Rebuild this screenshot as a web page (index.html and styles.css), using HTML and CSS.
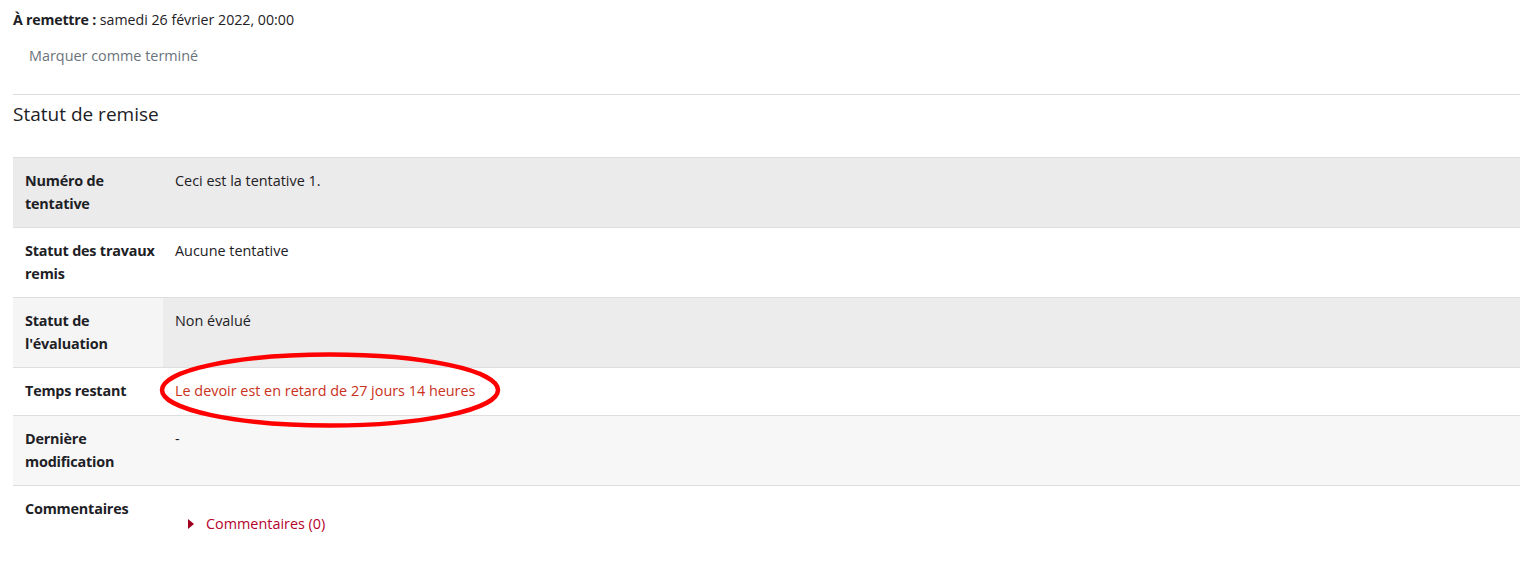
FILE: index.html
```html
<!DOCTYPE html>
<html lang="fr">
<head>
<meta charset="utf-8">
<title>Statut de remise</title>
<link rel="stylesheet" href="styles.css">
</head>
<body>
<div class="page">
  <div class="dates"><strong>À remettre :</strong> samedi 26 février 2022, 00:00</div>
  <div class="completion"><span class="btn-complete">Marquer comme terminé</span></div>
  <hr class="sep">
  <h3 class="title">Statut de remise</h3>
  <div class="status">
    <div class="row r-grey">
      <div class="label">Numéro de tentative</div>
      <div class="value">Ceci est la tentative 1.</div>
    </div>
    <div class="row r-white">
      <div class="label">Statut des travaux remis</div>
      <div class="value">Aucune tentative</div>
    </div>
    <div class="row r-split">
      <div class="label">Statut de l'évaluation</div>
      <div class="value">Non évalué</div>
    </div>
    <div class="row r-white r-short">
      <div class="label">Temps restant</div>
      <div class="value late">Le devoir est en retard de 27 jours 14 heures</div>
      <svg class="circle" width="346" height="80" viewBox="0 0 346 80"><ellipse cx="173" cy="40" rx="168" ry="35.5" fill="none" stroke="#ff0000" stroke-width="4.5"/></svg>
    </div>
    <div class="row r-light">
      <div class="label">Dernière modification</div>
      <div class="value">-</div>
    </div>
    <div class="row r-white r-last">
      <div class="label">Commentaires</div>
      <div class="value">
        <div class="comments"><svg class="caret" width="6" height="10" viewBox="0 0 6 10"><path d="M0 0 L6 5 L0 10 Z" fill="#a0001e"/></svg><span class="clink">Commentaires (0)</span></div>
      </div>
    </div>
  </div>
</div>
</body>
</html>
```
FILE: styles.css
```css
html, body {
  margin: 0;
  padding: 0;
  background: #fff;
}
body {
  font-family: "Open Sans", "Noto Sans", sans-serif;
  font-size: 14.4px;
  color: #1d2125;
}
.page {
  padding: 9px 3px 0 13px;
}
.dates {
  line-height: 21px;
  font-size: 14.2px;
}
.dates strong {
  font-weight: 700;
  letter-spacing: -0.2px;
}
.completion {
  padding: 15px 0 0 16px;
  line-height: 22px;
}
.btn-complete {
  color: #6a737b;
}
.sep {
  margin: 27px 0 0 0;
  border: 0;
  border-top: 1px solid #dcdcdc;
  height: 0;
}
.title {
  margin: 6px 0 0 0;
  font-size: 19px;
  font-weight: 400;
  line-height: 26px;
}
.status {
  margin-top: 30px;
}
.row {
  display: flex;
  position: relative;
  border-top: 1px solid #dedede;
  min-height: 69px;
}
.r-short {
  min-height: 47px;
  z-index: 2;
}
.label {
  width: 150px;
  flex: none;
  box-sizing: border-box;
  padding: 11px 2px 12px 12px;
  font-weight: 700;
  line-height: 23px;
  letter-spacing: -0.2px;
}
.value {
  flex: 1;
  padding: 11px 12px 12px 12px;
  line-height: 23px;
}
.r-grey {
  background: #ebebeb;
}
.r-light {
  background: #f7f7f7;
}
.r-split .label {
  background: #f5f5f5;
}
.r-split .value {
  background: #ececec;
}
.late {
  color: #ca3120;
}
.comments {
  display: flex;
  align-items: center;
  gap: 12px;
  padding: 15px 0 0 13px;
}
.clink {
  color: #b5002c;
}
.circle {
  position: absolute;
  left: 144px;
  top: -18px;
  z-index: 3;
  pointer-events: none;
}
```
